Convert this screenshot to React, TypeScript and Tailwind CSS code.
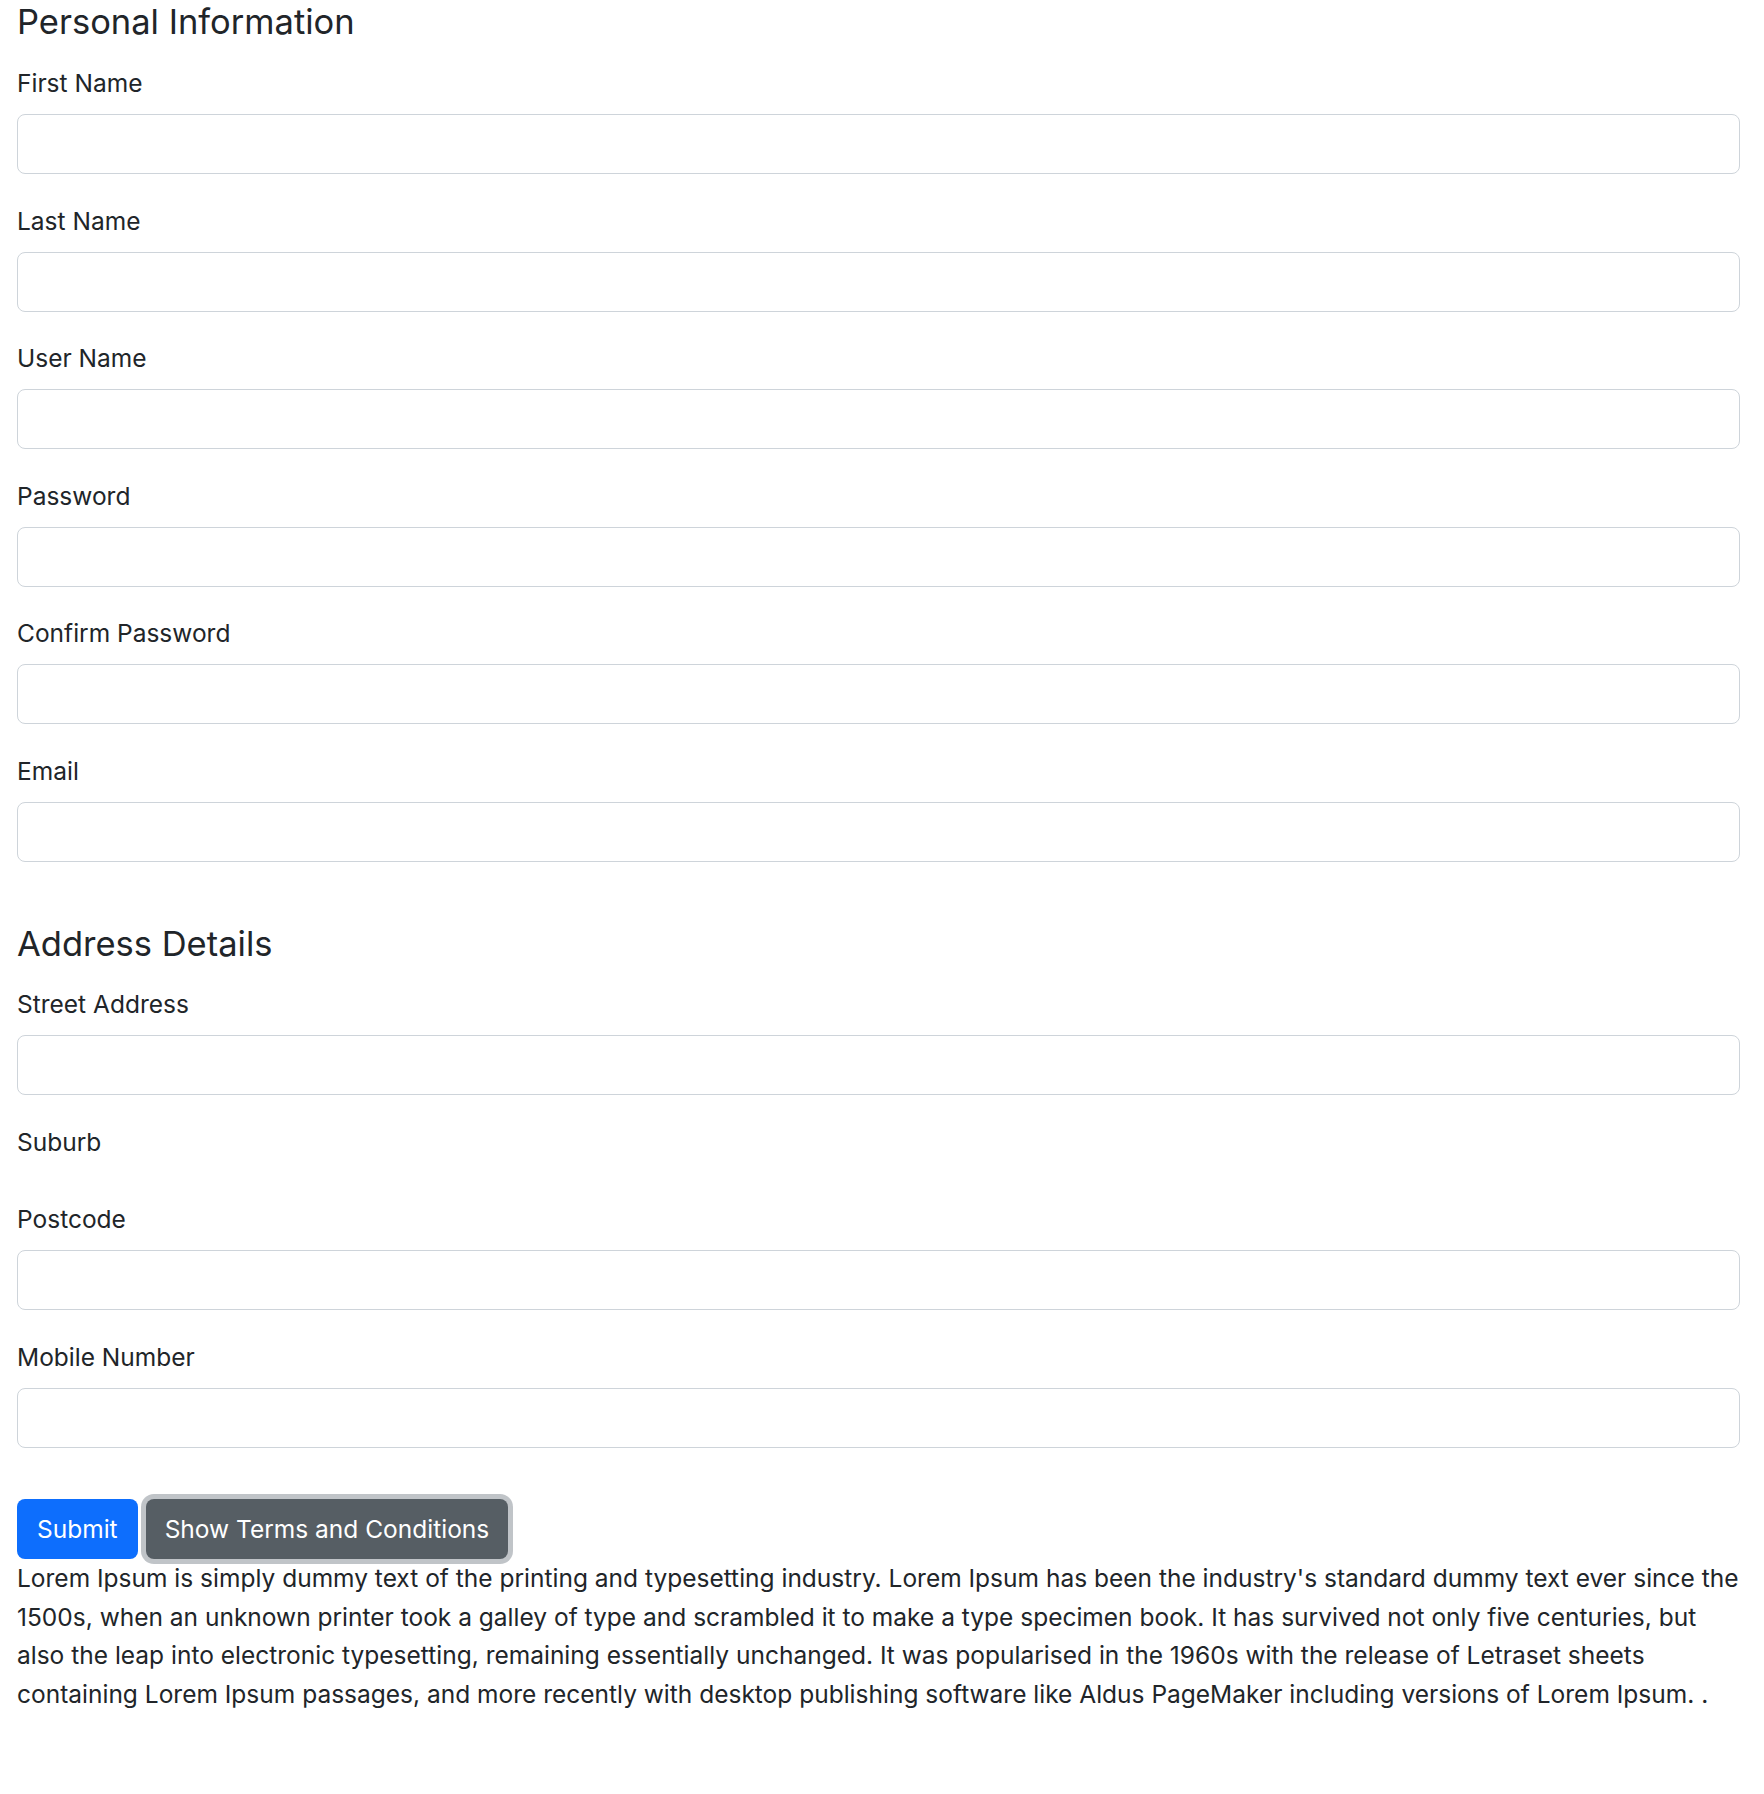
import React from 'react'

const font = { fontFamily: 'Inter, "Liberation Sans", Arial, sans-serif' }

function Field({ label, hideInput }: { label: string; hideInput?: boolean }) {
  return (
    <div className="flex flex-col mb-[28.5px]">
      <label className="block text-[24.5px] leading-[37px] mb-[12px] text-[#212529]">{label}</label>
      {hideInput ? (
        <div className="h-0" />
      ) : (
        <input
          type="text"
          className="block w-full h-[60px] px-[20px] text-[25px] border border-[#ced4da] rounded-[8px] bg-white outline-none"
        />
      )}
    </div>
  )
}

const lorem = [
  "Lorem Ipsum is simply dummy text of the printing and typesetting industry. Lorem Ipsum has been the industry's standard dummy text ever since the",
  '1500s, when an unknown printer took a galley of type and scrambled it to make a type specimen book. It has survived not only five centuries, but',
  'also the leap into electronic typesetting, remaining essentially unchanged. It was popularised in the 1960s with the release of Letraset sheets',
  'containing Lorem Ipsum passages, and more recently with desktop publishing software like Aldus PageMaker including versions of Lorem Ipsum. .',
]

export default function App() {
  return (
    <div className="min-h-[1794px] bg-white text-[#212529] pl-[17px] pr-[24px]" style={font}>
      <form onSubmit={e => e.preventDefault()} className="flex flex-col">
        <h3 className="text-[34.5px] leading-[42px] font-normal mt-px mb-[22px]">Personal Information</h3>
        <Field label="First Name" />
        <Field label="Last Name" />
        <Field label="User Name" />
        <Field label="Password" />
        <Field label="Confirm Password" />
        <Field label="Email" />

        <h3 className="text-[34.5px] leading-[42px] font-normal mt-[33px] mb-[21px]">Address Details</h3>
        <Field label="Street Address" />
        <Field label="Suburb" hideInput />
        <Field label="Postcode" />
        <Field label="Mobile Number" />

        <div className="flex items-start gap-[8px] mt-[23px]">
          <button
            type="submit"
            className="h-[60px] px-[20px] text-[24.5px] leading-[37px] text-white bg-[#0d6efd] rounded-[8px]"
          >
            Submit
          </button>
          <button
            type="button"
            className="h-[60px] px-[19px] text-[24.5px] leading-[37px] text-white bg-[#565e64] rounded-[8px] shadow-[0_0_0_5px_rgba(130,138,145,0.5)]"
          >
            Show Terms and Conditions
          </button>
        </div>
        <p className="text-[24.5px] leading-[38.5px]">
          {lorem.map((line, i) => (
            <span key={i} className="block whitespace-nowrap">
              {line}
            </span>
          ))}
        </p>
      </form>
    </div>
  )
}
